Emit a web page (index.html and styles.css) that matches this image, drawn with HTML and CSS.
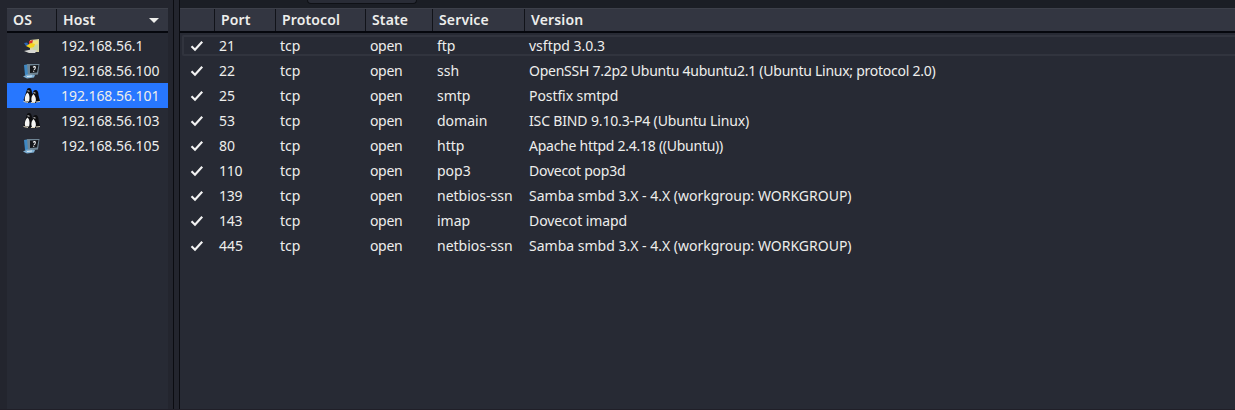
FILE: index.html
```html
<!DOCTYPE html>
<html lang="en">
<head>
<meta charset="utf-8">
<title>Hosts and services</title>
<link rel="stylesheet" href="styles.css">
</head>
<body>
<svg class="defs" width="0" height="0" aria-hidden="true">
  <symbol id="check" viewBox="0 0 14 12"><path d="M1.500 6.200 5 9.700 12.200 1.700" fill="none" stroke="#f2f2f2" stroke-width="2.200"/></symbol>
  <symbol id="flag" viewBox="0 0 18 16">
    <path d="M7 2 16 1 16 14 7 14Z" fill="#d8d3a0"/><path d="M10 3 15 2.500 15 6 10 7Z" fill="#efe37c"/><path d="M10 8 15 7 15 12 10 12Z" fill="#c6d6a8"/>
    <path d="M6 3 10 2 9 6 6 6Z" fill="#d8322b"/><path d="M1 5 4 4.500 6 7 3 8Z" fill="#2b65b8"/><path d="M3 8 8 5 12 6 11 9 7 10Z" fill="#f5d51d"/>
    <path d="M1 13 8 11.500 14 12.500 12 15 6 15Z" fill="#d6d7d2"/>
  </symbol>
  <symbol id="unknown" viewBox="0 0 18 16">
    <path d="M1 2 6 1 7 12 2 12Z" fill="#3f88c2"/><path d="M4 1 16.500 1 15 11.500 5 12.500Z" fill="#6f8594"/><path d="M7 2.500 15.500 2 14 9.500 7 10Z" fill="#15171b"/>
    <path d="M10 4.200Q12.500 2.800 12.300 4.800T10.800 6.800M10.700 7.800v1" fill="none" stroke="#fff" stroke-width="1.100"/>
    <path d="M0 13.500 4 11.500 12 12 11 14.500 4 15.500Z" fill="#7fb0d4"/><path d="M4 13.500 9 13" stroke="#dce9f0"/>
  </symbol>
  <symbol id="linux" viewBox="0 0 18 16">
    <path d="M6 0C3.500 0 4 3 2.500 6L0.500 12 4 15 9 14 9 5C9 2 8 0 6 0Z" fill="#0d0d0f"/><path d="M4.500 4.500C2 7 1 11 2.500 13.500L6 13.500C7 10 6.500 6 4.500 4.500Z" fill="#f5f5f3"/>
    <path d="M12.500 2C10 2 10 5 8 9V14L12 15 17 13 15.500 7C15.500 4 14.500 2 12.500 2Z" fill="#0d0d0f"/><path d="M10.500 6C8 8.500 8 12 9 14L12.500 14C13.500 11 12.500 8 10.500 6Z" fill="#f5f5f3"/>
    <path d="M4.500 2.800 6.500 3.200M10.500 4.700 12.500 5" stroke="#d8d8d8" fill="none"/><path d="M0.500 13.500 5 14.500M8 14.500H12M13 14 17 13.500" stroke="#d8ceb4" fill="none"/>
  </symbol>
</svg>
<main class="window">
  <aside class="hosts">
    <div class="header host-row"><span>OS</span><span>Host<i class="sort"></i></span></div>
    <div class="host-row"><svg class="os"><use href="#flag"/></svg><span>192.168.56.1</span></div>
    <div class="host-row"><svg class="os"><use href="#unknown"/></svg><span>192.168.56.100</span></div>
    <div class="host-row selected"><svg class="os"><use href="#linux"/></svg><span>192.168.56.101</span></div>
    <div class="host-row"><svg class="os"><use href="#linux"/></svg><span>192.168.56.103</span></div>
    <div class="host-row"><svg class="os"><use href="#unknown"/></svg><span>192.168.56.105</span></div>
  </aside>
  <div class="divider"></div>
  <section class="services">
    <div class="topbar"><div class="tab"></div></div>
    <div class="header port-row"><span></span><span>Port</span><span>Protocol</span><span>State</span><span>Service</span><span>Version</span></div>
    <div class="port-row focused"><svg class="check"><use href="#check"/></svg><span>21</span><span>tcp</span><span class="state">open</span><span>ftp</span><span>vsftpd 3.0.3</span></div>
    <div class="port-row"><svg class="check"><use href="#check"/></svg><span>22</span><span>tcp</span><span class="state">open</span><span>ssh</span><span class="tighter">OpenSSH 7.2p2 Ubuntu 4ubuntu2.1 (Ubuntu Linux; protocol 2.0)</span></div>
    <div class="port-row"><svg class="check"><use href="#check"/></svg><span>25</span><span>tcp</span><span class="state">open</span><span>smtp</span><span class="snug">Postfix smtpd</span></div>
    <div class="port-row"><svg class="check"><use href="#check"/></svg><span>53</span><span>tcp</span><span class="state">open</span><span>domain</span><span class="tight">ISC BIND 9.10.3-P4 (Ubuntu Linux)</span></div>
    <div class="port-row"><svg class="check"><use href="#check"/></svg><span>80</span><span>tcp</span><span class="state">open</span><span>http</span><span class="tighter">Apache httpd 2.4.18 ((Ubuntu))</span></div>
    <div class="port-row"><svg class="check"><use href="#check"/></svg><span class="tighter">110</span><span>tcp</span><span class="state">open</span><span>pop3</span><span class="tighter">Dovecot pop3d</span></div>
    <div class="port-row"><svg class="check"><use href="#check"/></svg><span class="tighter">139</span><span>tcp</span><span class="state">open</span><span>netbios-ssn</span><span>Samba smbd 3.X - 4.X (workgroup: WORKGROUP)</span></div>
    <div class="port-row"><svg class="check"><use href="#check"/></svg><span class="tighter">143</span><span>tcp</span><span class="state">open</span><span>imap</span><span class="snug">Dovecot imapd</span></div>
    <div class="port-row"><svg class="check"><use href="#check"/></svg><span>445</span><span>tcp</span><span class="state">open</span><span>netbios-ssn</span><span>Samba smbd 3.X - 4.X (workgroup: WORKGROUP)</span></div>
  </section>
</main>
</body>
</html>
```
FILE: styles.css
```css
* { box-sizing: border-box; }
body { margin: 0; background: #23252e; color: #eeeeec; font: 14px/25px "Noto Sans", sans-serif; }
.defs { display: block; }
.window { display: grid; grid-template-columns: 173px 7px 1fr; height: 410px; overflow: hidden; border-bottom: 1px solid #201f28; }
.hosts { margin: 8px 5px 0 7px; background: #272a34; }
.divider { background: #23252e; border: solid #0b0c11; border-width: 0 1px; }
.services { background: #272a34; }
.host-row { display: grid; grid-template-columns: 50px 1fr; height: 25px; align-items: center; white-space: nowrap; letter-spacing: -.07px; }
.host-row > span { padding-left: 4px; }
.os { width: 18px; height: 16px; margin-left: 16px; }
.selected { background: #2777ff; }
.topbar { height: 8px; background: #1b1e25; }
.tab { width: 110px; height: 4px; margin-left: 127px; background: #292c36; border: 1px solid #0f1116; border-top: 0; border-radius: 0 0 4px 4px; }
.port-row { display: grid; grid-template-columns: 35px 61px 90px 67px 92px 1fr; height: 25px; align-items: center; white-space: nowrap; }
.port-row > span { padding-left: 4px; }
.port-row .check { width: 14px; height: 12px; margin-left: 10px; }
.state { letter-spacing: -.35px; }
.snug { letter-spacing: -.08px; }
.tight { letter-spacing: -.15px; }
.tighter { letter-spacing: -.26px; }
/* Focus ring sits inside the row without shifting its cells */
.focused { position: relative; }
.focused::before { content: ""; position: absolute; inset: 2px 0 2px 2px; border: 2px solid #31343e; border-right: 0; border-radius: 2px 0 0 2px; pointer-events: none; }
.header { background: #333641; border-top: 1px solid #3d404a; border-bottom: 2px solid #05070d; font-weight: 600; line-height: 22px; letter-spacing: .15px; }
.header > span { height: 22px; padding-left: 6px; border-right: 1px solid #111319; }
.header > span:last-child { border-right: 0; }
.host-row.header > span:last-child { display: flex; justify-content: space-between; align-items: center; padding-right: 9px; }
.sort { border: 5px solid transparent; border-top-color: #eeeeec; border-bottom: 0; }
```
